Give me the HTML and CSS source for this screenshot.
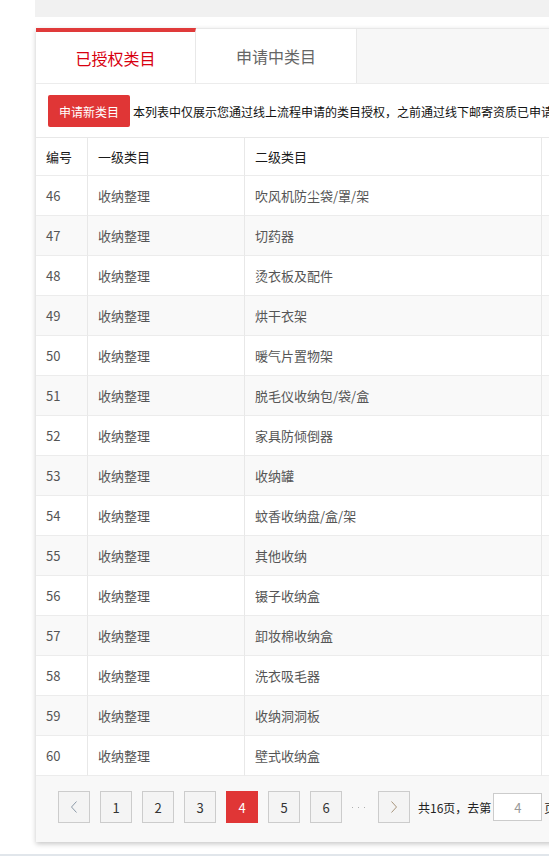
FILE: index.html
```html
<!DOCTYPE html>
<html lang="zh-CN">
<head>
<meta charset="utf-8">
<title>已授权类目</title>
<link rel="stylesheet" href="styles.css">
</head>
<body>
<div class="topbar"></div>
<div class="panel">
  <div class="tabs">
    <div class="tab active">已授权类目</div>
    <div class="tab">申请中类目</div>
  </div>
  <div class="content">
    <div class="toolbar">
      <button class="btn-apply">申请新类目</button>
      <span class="desc">本列表中仅展示您通过线上流程申请的类目授权，之前通过线下邮寄资质已申请的类目授权不在此列表中展示</span>
    </div>
    <table class="grid">
      <thead>
        <tr><th class="c1">编号</th><th class="c2">一级类目</th><th class="c3">二级类目</th><th class="c4"></th></tr>
      </thead>
      <tbody>
        <tr><td>46</td><td>收纳整理</td><td>吹风机防尘袋/罩/架</td><td></td></tr>
        <tr><td>47</td><td>收纳整理</td><td>切药器</td><td></td></tr>
        <tr><td>48</td><td>收纳整理</td><td>烫衣板及配件</td><td></td></tr>
        <tr><td>49</td><td>收纳整理</td><td>烘干衣架</td><td></td></tr>
        <tr><td>50</td><td>收纳整理</td><td>暖气片置物架</td><td></td></tr>
        <tr><td>51</td><td>收纳整理</td><td>脱毛仪收纳包/袋/盒</td><td></td></tr>
        <tr><td>52</td><td>收纳整理</td><td>家具防倾倒器</td><td></td></tr>
        <tr><td>53</td><td>收纳整理</td><td>收纳罐</td><td></td></tr>
        <tr><td>54</td><td>收纳整理</td><td>蚊香收纳盘/盒/架</td><td></td></tr>
        <tr><td>55</td><td>收纳整理</td><td>其他收纳</td><td></td></tr>
        <tr><td>56</td><td>收纳整理</td><td>镊子收纳盒</td><td></td></tr>
        <tr><td>57</td><td>收纳整理</td><td>卸妆棉收纳盒</td><td></td></tr>
        <tr><td>58</td><td>收纳整理</td><td>洗衣吸毛器</td><td></td></tr>
        <tr><td>59</td><td>收纳整理</td><td>收纳洞洞板</td><td></td></tr>
        <tr><td>60</td><td>收纳整理</td><td>壁式收纳盒</td><td></td></tr>
      </tbody>
    </table>
    <div class="pager">
      <a class="pg arrow"><svg width="8" height="12" viewBox="0 0 8 12"><polyline points="6.5,0.5 1.5,6 6.5,11.5" fill="none" stroke="#8c9aa8" stroke-width="1"/></svg></a>
      <a class="pg">1</a>
      <a class="pg">2</a>
      <a class="pg">3</a>
      <a class="pg current">4</a>
      <a class="pg">5</a>
      <a class="pg">6</a>
      <span class="ellipsis"><svg width="16" height="16" viewBox="0 0 16 16"><rect x="0" y="8" width="1" height="1" fill="#b0b0b0"/><rect x="6" y="8" width="1" height="1" fill="#b0b0b0"/><rect x="12" y="8" width="1" height="1" fill="#b0b0b0"/></svg></span>
      <a class="pg arrow"><svg width="8" height="12" viewBox="0 0 8 12"><polyline points="1.5,0.5 6.5,6 1.5,11.5" fill="none" stroke="#a8957c" stroke-width="1"/></svg></a>
      <span class="total">共16页，去第</span>
      <input class="goto" type="text" value="4">
      <span class="unit">页</span>
    </div>
  </div>
</div>
<div class="bottomline"></div>
</body>
</html>
```
FILE: styles.css
```css
html, body {
  margin: 0;
  padding: 0;
  background: #fff;
  overflow: hidden;
}
body {
  width: 549px;
  height: 856px;
  font-family: "Microsoft YaHei", "Noto Sans CJK SC", "Noto Sans", sans-serif;
  color: #333;
}
.topbar {
  margin-left: 35px;
  width: 1000px;
  height: 17px;
  background: #f1f1f1;
}
.panel {
  margin: 11px 0 0 36px;
  width: 1000px;
  background: #fff;
  box-shadow: 0 2px 5px rgba(0, 0, 0, 0.22);
}
.tabs {
  display: flex;
  height: 56px;
  box-sizing: border-box;
  background: #f7f7f7;
  border-top: 1px solid #e8e8e8;
  border-bottom: 1px solid #ececec;
}
.tab {
  width: 161px;
  box-sizing: border-box;
  display: flex;
  align-items: center;
  justify-content: center;
  background: #fff;
  border-right: 1px solid #e8e8e8;
  font-size: 16px;
  color: #666;
  margin-top: -1px;
  border-top: 1px solid #e8e8e8;
}
.tab.active {
  width: 160px;
  border-top: 4px solid #e03a3a;
  color: #d8000f;
}
.toolbar {
  display: flex;
  align-items: center;
  padding: 11px 0 10px 12px;
}
.btn-apply {
  width: 82px;
  height: 32px;
  border: none;
  border-radius: 2px;
  background: #e03636;
  color: #fff;
  font-family: inherit;
  font-size: 12px;
  padding: 0;
}
.desc {
  margin-left: 3px;
  font-size: 12px;
  color: #111;
  white-space: nowrap;
}
.grid {
  width: 1000px;
  border-collapse: separate;
  border-spacing: 0;
  table-layout: fixed;
  font-size: 13px;
}
.grid th, .grid td {
  box-sizing: border-box;
  padding: 0 10px;
  text-align: left;
  border-bottom: 1px solid #ececec;
  border-right: 1px solid #e8e8e8;
  white-space: nowrap;
}
.grid th {
  height: 39px;
  font-weight: normal;
  color: #1a1a1a;
  border-top: 1px solid #e8e8e8;
  background: #fff;
}
.grid td {
  height: 40px;
  color: #555;
}
.grid tbody tr:nth-child(even) td {
  background: #f9f9f9;
}
.c1 { width: 52px; }
.c2 { width: 157px; }
.c3 { width: 297px; }
.pager {
  display: flex;
  align-items: center;
  background: #f8f8f8;
  padding: 15px 0 19px 22px;
  gap: 10px;
}
.pg {
  width: 32px;
  height: 32px;
  box-sizing: border-box;
  border: 1px solid #cccccc;
  background: #f4f4f4;
  display: flex;
  align-items: center;
  justify-content: center;
  font-size: 13px;
  color: #333;
}
.pg.current {
  background: #e03636;
  border-color: #e03636;
  color: #fff;
}
.ellipsis {
  width: 16px;
  height: 16px;
  display: flex;
}
.total {
  margin-left: -2px;
  font-size: 12px;
  color: #222;
  white-space: nowrap;
}
.goto {
  margin-left: -8px;
  width: 49px;
  height: 28px;
  box-sizing: border-box;
  border: 1px solid #cccccc;
  background: #fff;
  text-align: center;
  font-family: inherit;
  font-size: 13px;
  color: #999;
  padding: 0;
}
.unit {
  margin-left: -8px;
  font-size: 12px;
  color: #222;
}
.bottomline {
  margin-top: 12px;
  height: 2px;
  background: #e1e6eb;
}
```
